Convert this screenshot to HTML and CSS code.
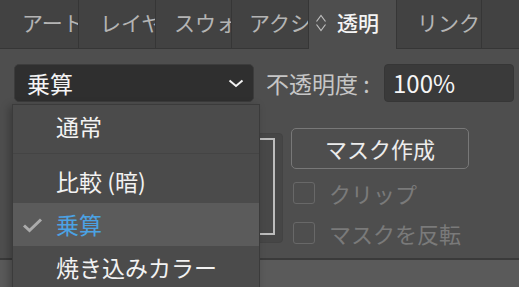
FILE: index.html
```html
<!DOCTYPE html>
<html lang="ja">
<head>
  <meta charset="UTF-8" />
  <title>透明</title>
  <link rel="stylesheet" href="styles.css">
</head>
<body>

<!-- Panel tabs -->
<div class="tabs">
  <div class="tab tab-1">アート</div>
  <div class="tab tab-2">レイヤ</div>
  <div class="tab tab-3">スウォ</div>
  <div class="tab tab-4">アクシ</div>
  <div class="tab tab-active">
    <svg class="tab-icon" width="12" height="20" viewBox="0 0 12 20">
      <polyline points="1.5,8.5 6,2.5 10.5,8.5" fill="none" stroke="#bdbdbd" stroke-width="1.2"/>
      <polyline points="1.5,11.5 6,17.5 10.5,11.5" fill="none" stroke="#bdbdbd" stroke-width="1.2"/>
    </svg>
    透明
  </div>
  <div class="tab tab-6">リンク</div>
  <div class="tab tab-rest"></div>
</div>

<div class="panel">
  <div class="row-top">
    <div class="blend-select">
      <span>乗算</span>
      <svg width="16" height="9" viewBox="0 0 16 9">
        <polyline points="1.5,1.5 8,7 14.5,1.5" fill="none" stroke="#f2f2f2" stroke-width="2"/>
      </svg>
    </div>
    <div class="opacity-label">不透明度 :</div>
    <div class="opacity-input">100%</div>
  </div>

  <div class="row-mask">
    <div class="thumbs">
      <div class="thumb-frame">
        <div class="thumb"></div>
      </div>
    </div>
    <div class="mask-controls">
      <div class="btn-mask">マスク作成</div>
      <label class="check-row">
        <span class="check-box"></span>
        クリップ
      </label>
      <label class="check-row">
        <span class="check-box"></span>
        マスクを反転
      </label>
    </div>
  </div>
</div>

<!-- Blend mode menu (open) -->
<div class="blend-menu">
  <div class="menu-item">通常</div>
  <div class="menu-sep"></div>
  <div class="menu-item">比較 (暗)</div>
  <div class="menu-item selected">
    <svg class="check-mark" width="21" height="16" viewBox="0 0 21 16">
      <polyline points="2,8.5 7.5,13.5 19,2.5" fill="none" stroke="#ababab" stroke-width="3"/>
    </svg>
    乗算
  </div>
  <div class="menu-item">焼き込みカラー</div>
</div>

</body>
</html>
```

FILE: styles.css
```css
body {
  margin: 0;
  width: 519px;
  height: 287px;
  overflow: hidden;
  position: relative;
  background: #5a5a5a;
  font-family: "Noto Sans CJK JP", "Noto Sans", sans-serif;
  color: #f0f0f0;
}

/* Tabs */
.tabs {
  display: flex;
  height: 48px;
  background: #424242;
  border-bottom: 1px solid #363636;
}

.tab {
  height: 48px;
  line-height: 45px;
  padding-left: 20px;
  box-sizing: border-box;
  border-right: 1px solid #363636;
  font-size: 21px;
  color: #b4b4b4;
  white-space: nowrap;
  overflow: hidden;
  flex-shrink: 0;
}

.tab-1 { width: 79px; padding-left: 22px; }
.tab-2 { width: 77px; padding-left: 21px; }
.tab-3 { width: 76px; padding-left: 18px; }
.tab-4 { width: 77px; padding-left: 17px; }
.tab-6 { width: 85px; }
.tab-rest { flex: 1; border-right: none; }

.tab-active {
  width: 88px;
  height: 49px;
  margin-bottom: -1px;
  padding-left: 6px;
  background: #4e4e4e;
  color: #f4f4f4;
  font-weight: 500;
  display: flex;
  align-items: center;
  gap: 10px;
  line-height: 1;
  padding-bottom: 4px;
}

.tab-icon {
  flex-shrink: 0;
}

/* Panel body */
.panel {
  height: 211px;
  box-sizing: border-box;
  padding: 15px 0 0 14px;
  background: #4e4e4e;
  border-bottom: 2px solid #3a3a3a;
}

.row-top {
  display: flex;
  align-items: center;
  height: 38px;
}

.blend-select {
  width: 240px;
  height: 38px;
  box-sizing: border-box;
  display: flex;
  align-items: center;
  justify-content: space-between;
  padding: 0 9px 0 12px;
  background: #2f2f2f;
  border: 1px solid #3c3c3c;
  border-radius: 5px;
  font-size: 23px;
  color: #f4f4f4;
}

.opacity-label {
  width: 118px;
  margin-left: 12px;
  font-size: 23px;
  color: #c6c6c6;
  white-space: nowrap;
}

.opacity-input {
  flex: 1;
  height: 38px;
  margin-right: 5px;
  box-sizing: border-box;
  padding-left: 8px;
  line-height: 36px;
  background: #3a3a3a;
  border: 1px solid #363636;
  border-radius: 4px;
  font-size: 24px;
  color: #f6f6f6;
}

.row-mask {
  display: flex;
  margin-top: 26px;
}

.thumbs {
  width: 269px;
  display: flex;
  justify-content: flex-end;
}

.thumb-frame {
  width: 110px;
  height: 110px;
  margin-top: 5px;
  box-sizing: border-box;
  padding: 4px 7px 7px 4px;
  background: #464646;
  border: 1px solid #434343;
  border-radius: 4px;
}

.thumb {
  height: 100%;
  box-sizing: border-box;
  border: 2px solid #bcbcbc;
  background: #484848;
}

.mask-controls {
  margin-left: 8px;
  display: flex;
  flex-direction: column;
}

.btn-mask {
  width: 178px;
  height: 41px;
  box-sizing: border-box;
  border: 1.5px solid #787878;
  border-radius: 5px;
  text-align: center;
  line-height: 38px;
  font-size: 22px;
  color: #ececec;
  margin-bottom: 4px;
}

.check-row {
  display: flex;
  align-items: center;
  gap: 14px;
  height: 40px;
  padding-left: 2px;
  font-size: 22px;
  color: #7a7a7a;
}

.check-box {
  width: 22px;
  height: 22px;
  box-sizing: border-box;
  border: 1.5px solid #686868;
  border-radius: 3px;
}

/* Popup menu */
.blend-menu {
  position: absolute;
  left: 12px;
  top: 104px;
  width: 248px;
  height: 190px;
  box-sizing: border-box;
  background: #4b4b4b;
  border: 1px solid #3b3b3b;
  box-shadow: -3px 2px 8px rgba(0, 0, 0, 0.25);
}

.menu-item {
  position: relative;
  height: 43px;
  line-height: 43px;
  padding-left: 43px;
  font-size: 23px;
  color: #f2f2f2;
  white-space: nowrap;
}

.menu-sep {
  height: 1px;
  margin: 5px 0 6px;
  background: #444444;
}

.menu-item.selected {
  background: #5b5b5b;
  color: #4ba2e4;
}

.check-mark {
  position: absolute;
  left: 9px;
  top: 14px;
}
```
